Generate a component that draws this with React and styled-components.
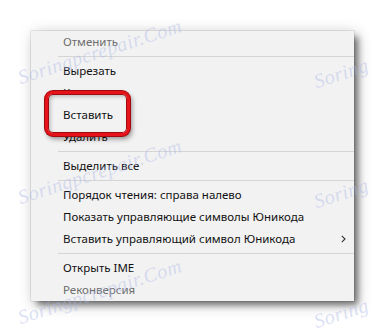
import React from "react";
import styled, { createGlobalStyle } from "styled-components";

const GlobalStyle = createGlobalStyle`
  html, body { margin: 0; padding: 0; background: #ffffff; }
  #root { width: 386px; height: 331px; }
`;

const Page = styled.div`
  position: relative;
  width: 386px;
  height: 331px;
  overflow: hidden;
  box-sizing: border-box;
  padding: 31px 0 0 31px;
  background: #ffffff;
  font-family: "Noto Sans", "Open Sans", sans-serif;
`;

const Menu = styled.div`
  width: 323px;
  background: #f2f2f2;
  box-shadow: 0 0 0 1px rgba(0, 0, 0, 0.07), 5px 5px 6px -1px rgba(0, 0, 0, 0.45),
    3px 3px 14px rgba(0, 0, 0, 0.28);
  display: flex;
  flex-direction: column;
`;

const Item = styled.div`
  height: 22px;
  display: flex;
  align-items: center;
  justify-content: space-between;
  padding: 0 8px 0 32px;
  font-size: 11.5px;
  color: ${(p) => (p.$disabled ? "#6d6d6d" : "#111111")};
  white-space: nowrap;

  ${(p) =>
    p.$highlight &&
    `
    position: relative;
    & > span { position: relative; z-index: 2; }
    &::before {
      content: "";
      position: absolute;
      left: 14px;
      top: -13px;
      width: 85px;
      height: 45px;
      box-sizing: border-box;
      border: 3px solid #e5141b;
      border-radius: 8px;
      background: #f2f2f2;
      box-shadow: 0 0 0 1px #a30a0f, inset 0 0 0 1px #a30a0f,
        inset 2px 2px 4px rgba(0, 0, 0, 0.28), 2px 3px 5px rgba(0, 0, 0, 0.4);
      z-index: 1;
    }
  `}
`;

const Label = styled.span`
  line-height: 22px;
`;

const Separator = styled.div`
  height: 7px;
  display: flex;
  align-items: center;
  padding-left: 27px;

  &::after {
    content: "";
    flex: 1;
    height: 1px;
    background: #d5d5d5;
  }
`;

const Chevron = () => (
  <svg width="5" height="8" viewBox="0 0 5 8">
    <path d="M0.8 0.8 L4 4 L0.8 7.2" fill="none" stroke="#333" strokeWidth="1.1" />
  </svg>
);

const Watermark = styled.span`
  position: absolute;
  left: ${(p) => p.$x}px;
  top: ${(p) => p.$y}px;
  transform: rotate(-18deg);
  transform-origin: 0 100%;
  font-family: "Liberation Serif", serif;
  font-style: italic;
  font-size: 20px;
  letter-spacing: 0.5px;
  color: rgba(170, 182, 232, 0.42);
  white-space: nowrap;
  pointer-events: none;
  z-index: 5;
`;

const items = [
  { t: "Отменить", d: true },
  { sep: true },
  { t: "Вырезать" },
  { t: "Копировать" },
  { t: "Вставить", h: true },
  { t: "Удалить" },
  { sep: true },
  { t: "Выделить все" },
  { sep: true },
  { t: "Порядок чтения: справа налево" },
  { t: "Показать управляющие символы Юникода" },
  { t: "Вставить управляющий символ Юникода", sub: true },
  { sep: true },
  { t: "Открыть IME" },
  { t: "Реконверсия", d: true },
];

const marks = [
  [22, 66, "Soringpcrepair.Com"],
  [22, 186, "Soringpcrepair.Com"],
  [22, 306, "Soringpcrepair.Com"],
  [318, 70, "Soring"],
  [318, 190, "Soring"],
  [318, 310, "Soring"],
];

export default function App() {
  return (
    <Page>
      <GlobalStyle />
      <Menu>
        {items.map((it, i) =>
          it.sep ? (
            <Separator key={i} />
          ) : (
            <Item key={i} $disabled={it.d} $highlight={it.h}>
              <Label>{it.t}</Label>
              {it.sub && <Chevron />}
            </Item>
          )
        )}
      </Menu>
      {marks.map(([x, y, t], i) => (
        <Watermark key={i} $x={x} $y={y}>
          {t}
        </Watermark>
      ))}
    </Page>
  );
}
